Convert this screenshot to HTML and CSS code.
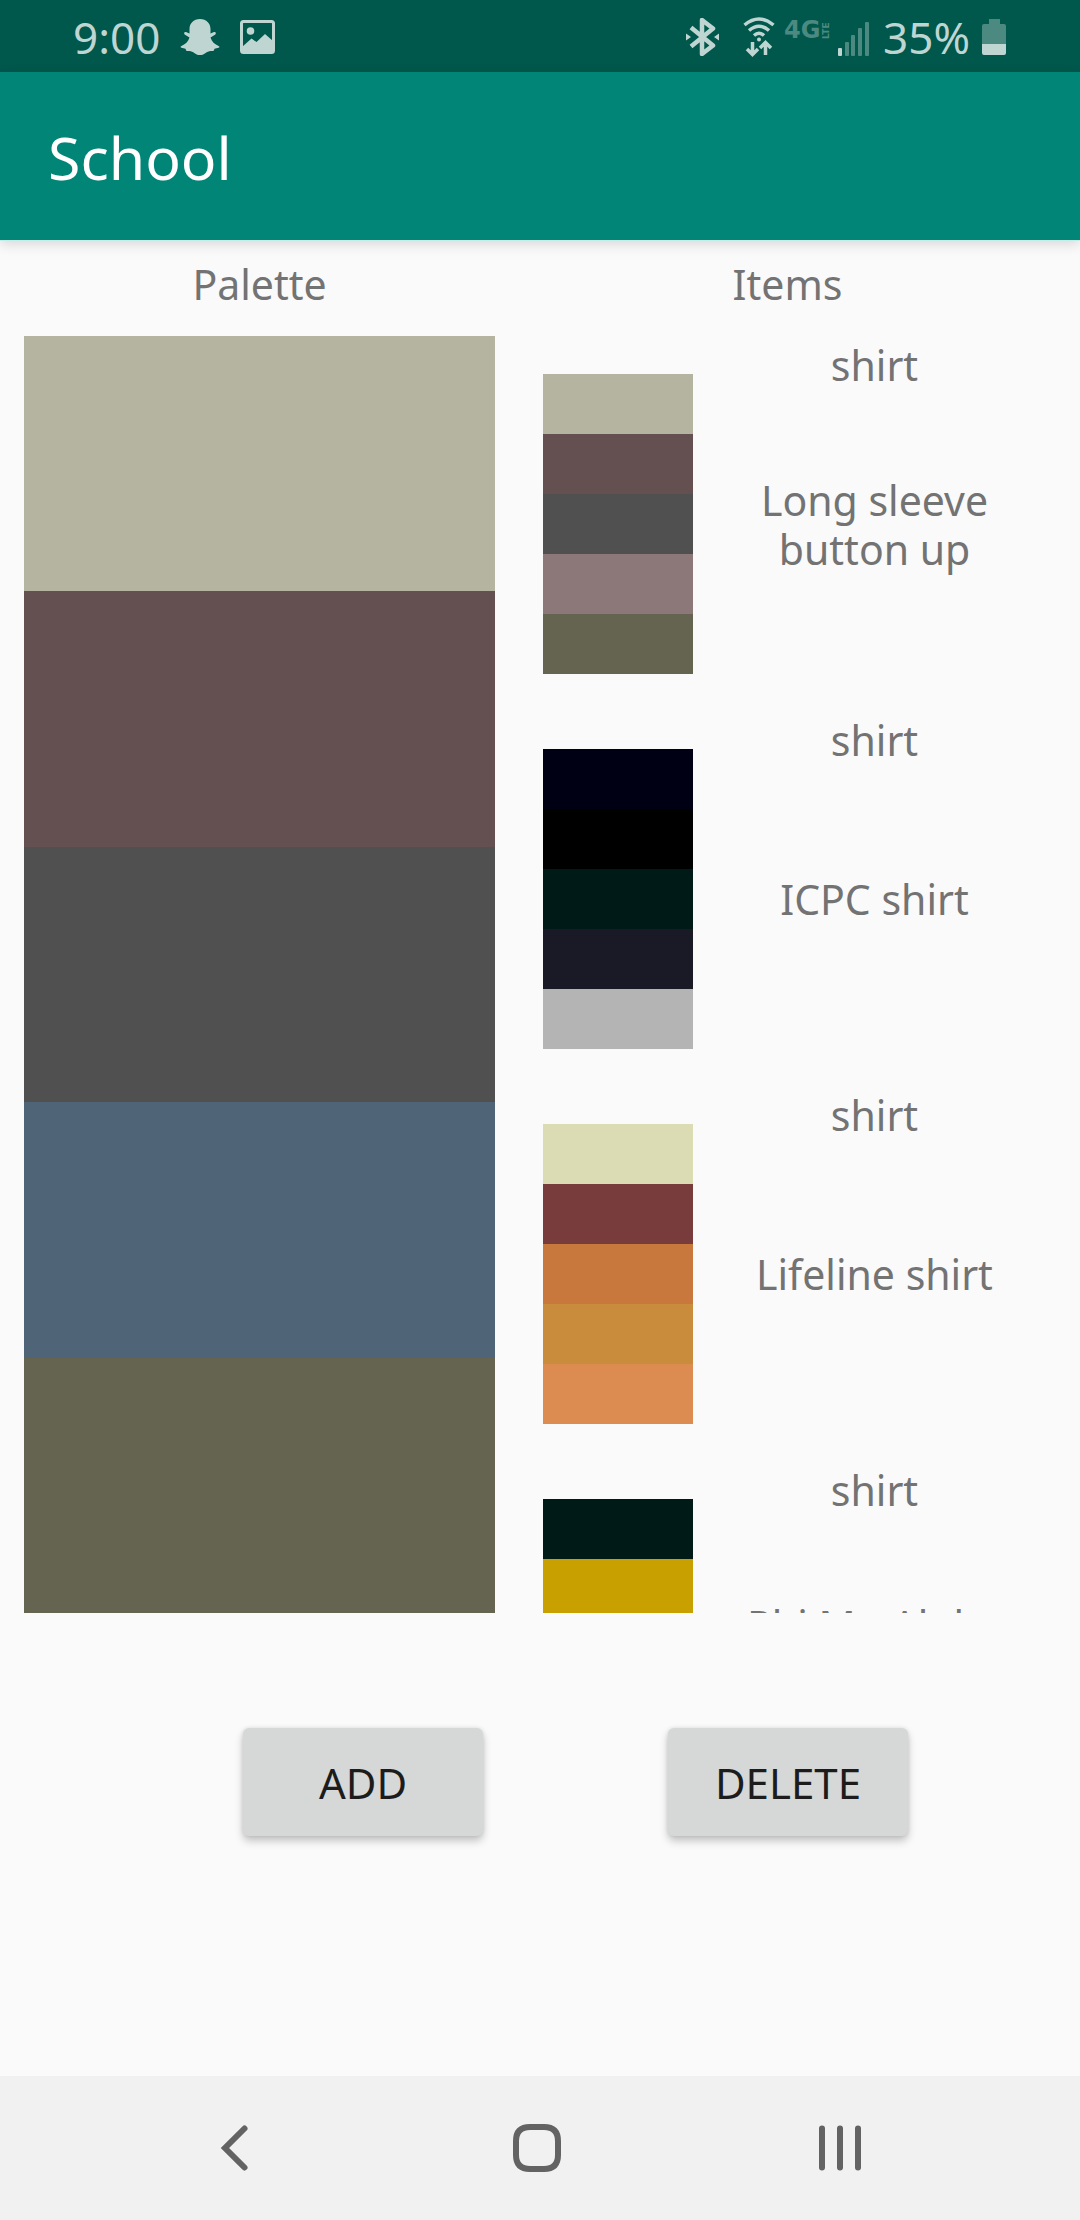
FILE: index.html
```html
<!DOCTYPE html>
<html lang="en">
<head>
<meta charset="utf-8">
<meta name="viewport" content="width=device-width, initial-scale=1">
<title>School</title>
<link rel="stylesheet" href="styles.css">
</head>
<body>
<div class="screen">
  <div class="status">
    <div class="status-left">
      <span class="status-text">9:00</span>
      <svg class="icon-snap" width="40" height="38" viewBox="0 0 40 38" fill="currentColor" aria-hidden="true"><path d="M20 1C13.500 1 9.500 5.500 9.500 11v4.500L6 14c-2-.5-2.500 1.700-1 2.700l4.500 2.800c-1.200 4-4 6.800-8.500 8.700-.8.500-.5 1.200.5 1.500l4 1c.5 2 1 2.500 2.500 2.300 5.500-.8 6.500 4 12 4s6.500-4.800 12-4c1.500.2 2-.3 2.500-2.300l4-1c1-.3 1.300-1 .5-1.500-4.500-1.900-7.300-4.700-8.500-8.700l4.500-2.800c1.500-1 1-3.200-1-2.700l-3.500 1.500V11C30.500 5.500 26.500 1 20 1z"/></svg>
      <svg width="35" height="34" viewBox="0 0 35 34" fill="none" stroke="currentColor" aria-hidden="true"><rect x="1.500" y="1.500" width="32" height="31" rx="2" stroke-width="3"/><circle cx="10.500" cy="11" r="3.800" fill="currentColor" stroke="none"/><path d="M2 27l9.500-8.500 5 3.500 8.500-8 8 7v11H2z" fill="currentColor" stroke="none"/></svg>
    </div>
    <div class="status-right">
      <svg class="icon-bt" width="33" height="38" viewBox="0 0 33 38" fill="none" stroke="currentColor" aria-hidden="true"><path d="M5 9.500l22 18L16 36V2l11 8.500L5 28.500" stroke-width="4.500" stroke-linejoin="round"/><path d="M0 15.500v7l5-3.500zM33 15.500v7l-5-3.500z" fill="currentColor" stroke="none"/></svg>
      <svg class="icon-wifi" width="32" height="40" viewBox="0 0 32 40" fill="none" stroke="currentColor" stroke-width="3.500" aria-hidden="true"><path d="M1.500 8Q16-4 30.500 8M6 13.500Q16 5 26 13.500M11 18.500Q16 14 21 18.500"/><circle cx="16" cy="22.500" r="2" fill="currentColor" stroke="none"/><path d="M9.500 25v12M4 32l5.500 5.500L15 32M22.500 38V26M17 31l5.500-5.500L28 31"/></svg>
      <svg class="icon-lte dim" width="45" height="19" viewBox="0 0 45 19" fill="currentColor" role="img" aria-label="4G LTE"><text class="lte-main" x="-1" y="18">4G</text><text class="lte-side" transform="translate(44 19) rotate(-90)">LTE</text></svg>
      <svg class="icon-signal" width="31" height="34" viewBox="0 0 31 34" fill="currentColor" aria-hidden="true"><rect x="0" y="26" width="4" height="8" rx="1"/><g class="dim"><rect x="7" y="20" width="4" height="14" rx="1"/><rect x="13" y="13" width="4" height="21" rx="1"/><rect x="20" y="6" width="4" height="28" rx="1"/><rect x="27" y="0" width="4" height="34" rx="1"/></g></svg>
      <span class="status-text">35%</span>
      <svg class="icon-battery" width="24" height="36" viewBox="0 0 24 36" fill="currentColor" aria-hidden="true"><path class="dim" d="M7 0h11v5h4q2 0 2 2v18H0V7q0-2 2-2h5z"/><path d="M0 25h24v9q0 2-2 2H2q-2 0-2-2z"/></svg>
    </div>
  </div>

  <header class="app-bar"><h1 class="app-title">School</h1></header>

  <main class="content">
    <div class="columns">
      <section class="column">
        <h2 class="heading">Palette</h2>
        <div class="palette">
          <div class="sand"></div><div class="plum"></div><div class="gray"></div><div class="blue"></div><div class="olive"></div>
        </div>
      </section>
      <section class="column">
        <h2 class="heading">Items</h2>
        <ul class="items">
          <li class="item">
            <div class="swatch"><div class="sand"></div><div class="plum"></div><div class="gray"></div><div class="mauve"></div><div class="olive"></div></div>
            <div class="item-text"><p class="kind">shirt</p><p class="name">Long sleeve button up</p></div>
          </li>
          <li class="item">
            <div class="swatch"><div class="navy"></div><div class="black"></div><div class="pine"></div><div class="ink"></div><div class="silver"></div></div>
            <div class="item-text"><p class="kind">shirt</p><p class="name">ICPC shirt</p></div>
          </li>
          <li class="item">
            <div class="swatch"><div class="cream"></div><div class="brick"></div><div class="rust"></div><div class="ochre"></div><div class="peach"></div></div>
            <div class="item-text"><p class="kind">shirt</p><p class="name">Lifeline shirt</p></div>
          </li>
          <li class="item">
            <div class="swatch"><div class="pine"></div><div class="gold"></div><div class="black"></div><div class="gray"></div><div class="silver"></div></div>
            <div class="item-text"><p class="kind">shirt</p><p class="name">Phi Mu Alpha shirt</p></div>
          </li>
        </ul>
      </section>
    </div>
    <div class="actions">
      <button class="action" type="button">ADD</button>
      <button class="action" type="button">DELETE</button>
    </div>
  </main>

  <nav class="nav-bar">
    <button class="nav-button" type="button" aria-label="Back"><svg width="48" height="48" viewBox="0 0 48 48" fill="none" stroke="currentColor" stroke-width="6" stroke-linecap="round"><path d="M34.500 4.500L15 24l19.500 19.500"/></svg></button>
    <button class="nav-button" type="button" aria-label="Home"><svg width="48" height="48" viewBox="0 0 48 48" fill="none" stroke="currentColor" stroke-width="6"><path d="M17 3h14Q45 3 45 17v14Q45 45 31 45H17Q3 45 3 31V17Q3 3 17 3z"/></svg></button>
    <button class="nav-button" type="button" aria-label="Recent apps"><svg width="48" height="48" viewBox="0 0 48 48" fill="none" stroke="currentColor" stroke-width="6" stroke-linecap="round"><path d="M6 4.500v39M24 4.500v39M42 4.500v39"/></svg></button>
  </nav>
</div>
</body>
</html>
```
FILE: styles.css
```css
* {
  box-sizing: border-box;
}

body {
  margin: 0;
  background: #fafafa;
  color: #737373;
  font-family: "Noto Sans", sans-serif;
  font-size: 41px;
  line-height: 49px;
}

h1, h2, p, ul {
  margin: 0;
  padding: 0;
  font-weight: 400;
}

svg {
  display: block;
}

.screen {
  display: flex;
  flex-direction: column;
  height: 100vh;
}

/* System status bar */
.status {
  display: flex;
  justify-content: space-between;
  height: 72px;
  padding: 2px 74px 0 73px;
  background: #00574b;
  color: #bfd5d2;
}

.status-left,
.status-right {
  display: flex;
  align-items: center;
}

.status-left {
  gap: 20px;
}

.status-text {
  font-size: 44px;
}

.dim {
  opacity: 0.4;
}

.icon-wifi {
  margin-left: 24px;
}

.icon-lte {
  align-self: flex-start;
  margin: 18px 8px 0 10px;
  overflow: visible;
}

.lte-main,
.lte-side {
  font-family: "DejaVu Sans", sans-serif;
  font-weight: 700;
}

.lte-main {
  font-size: 24px;
}

.lte-side {
  font-size: 9px;
}

.icon-signal {
  margin: 4px 14px 0 0;
}

.icon-battery {
  margin-left: 12px;
}

/* App bar */
.app-bar {
  display: flex;
  align-items: center;
  height: 168px;
  padding: 2px 48px 0;
  background: #008577;
  color: #fff;
  box-shadow: 0 1px 0 #c8ece8, 0 4px 12px rgba(0, 0, 0, 0.14);
  z-index: 1;
}

.app-title {
  font-size: 59px;
  line-height: 72px;
}

/* Palette and items */
.content {
  flex: 1;
  min-height: 0;
  display: flex;
  flex-direction: column;
}

.columns {
  flex: 1;
  min-height: 0;
  display: grid;
  grid-template-columns: 471fr 537fr;
  grid-template-rows: 100%;
  gap: 24px;
  padding: 0 24px;
}

.column {
  display: flex;
  flex-direction: column;
  min-height: 0;
}

.heading {
  padding: 20px 0 27px;
  font-size: 41px;
  text-align: center;
}

.palette,
.swatch {
  display: grid;
  grid-auto-rows: 1fr;
}

.palette {
  flex: 1;
}

.items {
  flex: 1;
  min-height: 0;
  overflow-y: auto;
  scrollbar-width: none;
  list-style: none;
}

.item {
  display: flex;
  height: 375px;
  padding-left: 24px;
}

.swatch {
  flex: none;
  align-self: center;
  width: 150px;
  height: 300px;
}

.item-text {
  flex: 1;
  display: grid;
  padding: 5px 24px 3px;
  text-align: center;
}

.kind,
.name {
  grid-area: 1 / 1;
}

.name {
  align-self: center;
}

.sand { background: #b4b4a0; }
.plum { background: #645050; }
.gray { background: #505050; }
.blue { background: #506478; }
.olive { background: #646450; }
.mauve { background: #8c7878; }
.navy { background: #000014; }
.black { background: #000; }
.pine { background: #001a18; }
.ink { background: #1a1a26; }
.silver { background: #b4b4b4; }
.cream { background: #dcdcb4; }
.brick { background: #783c3c; }
.rust { background: #c8783c; }
.ochre { background: #c88c3c; }
.peach { background: #dc8c50; }
.gold { background: #c8a000; }

/* Actions */
.actions {
  display: flex;
  justify-content: space-between;
  padding: 115px 172px 240px 243px;
}

.action {
  min-width: 240px;
  height: 108px;
  padding: 0 24px;
  border: 0;
  border-radius: 6px;
  background: #d6d8d7;
  box-shadow: 0 5px 8px rgba(0, 0, 0, 0.22), 0 0 4px rgba(0, 0, 0, 0.1);
  color: #1c1c1c;
  font-family: inherit;
  font-size: 42px;
}

/* System navigation bar */
.nav-bar {
  display: flex;
  justify-content: space-between;
  align-items: center;
  height: 144px;
  padding: 0 216px 0 210px;
  background: #f1f1f1;
}

.nav-button {
  padding: 0;
  border: 0;
  background: none;
  color: #636363;
}
```
